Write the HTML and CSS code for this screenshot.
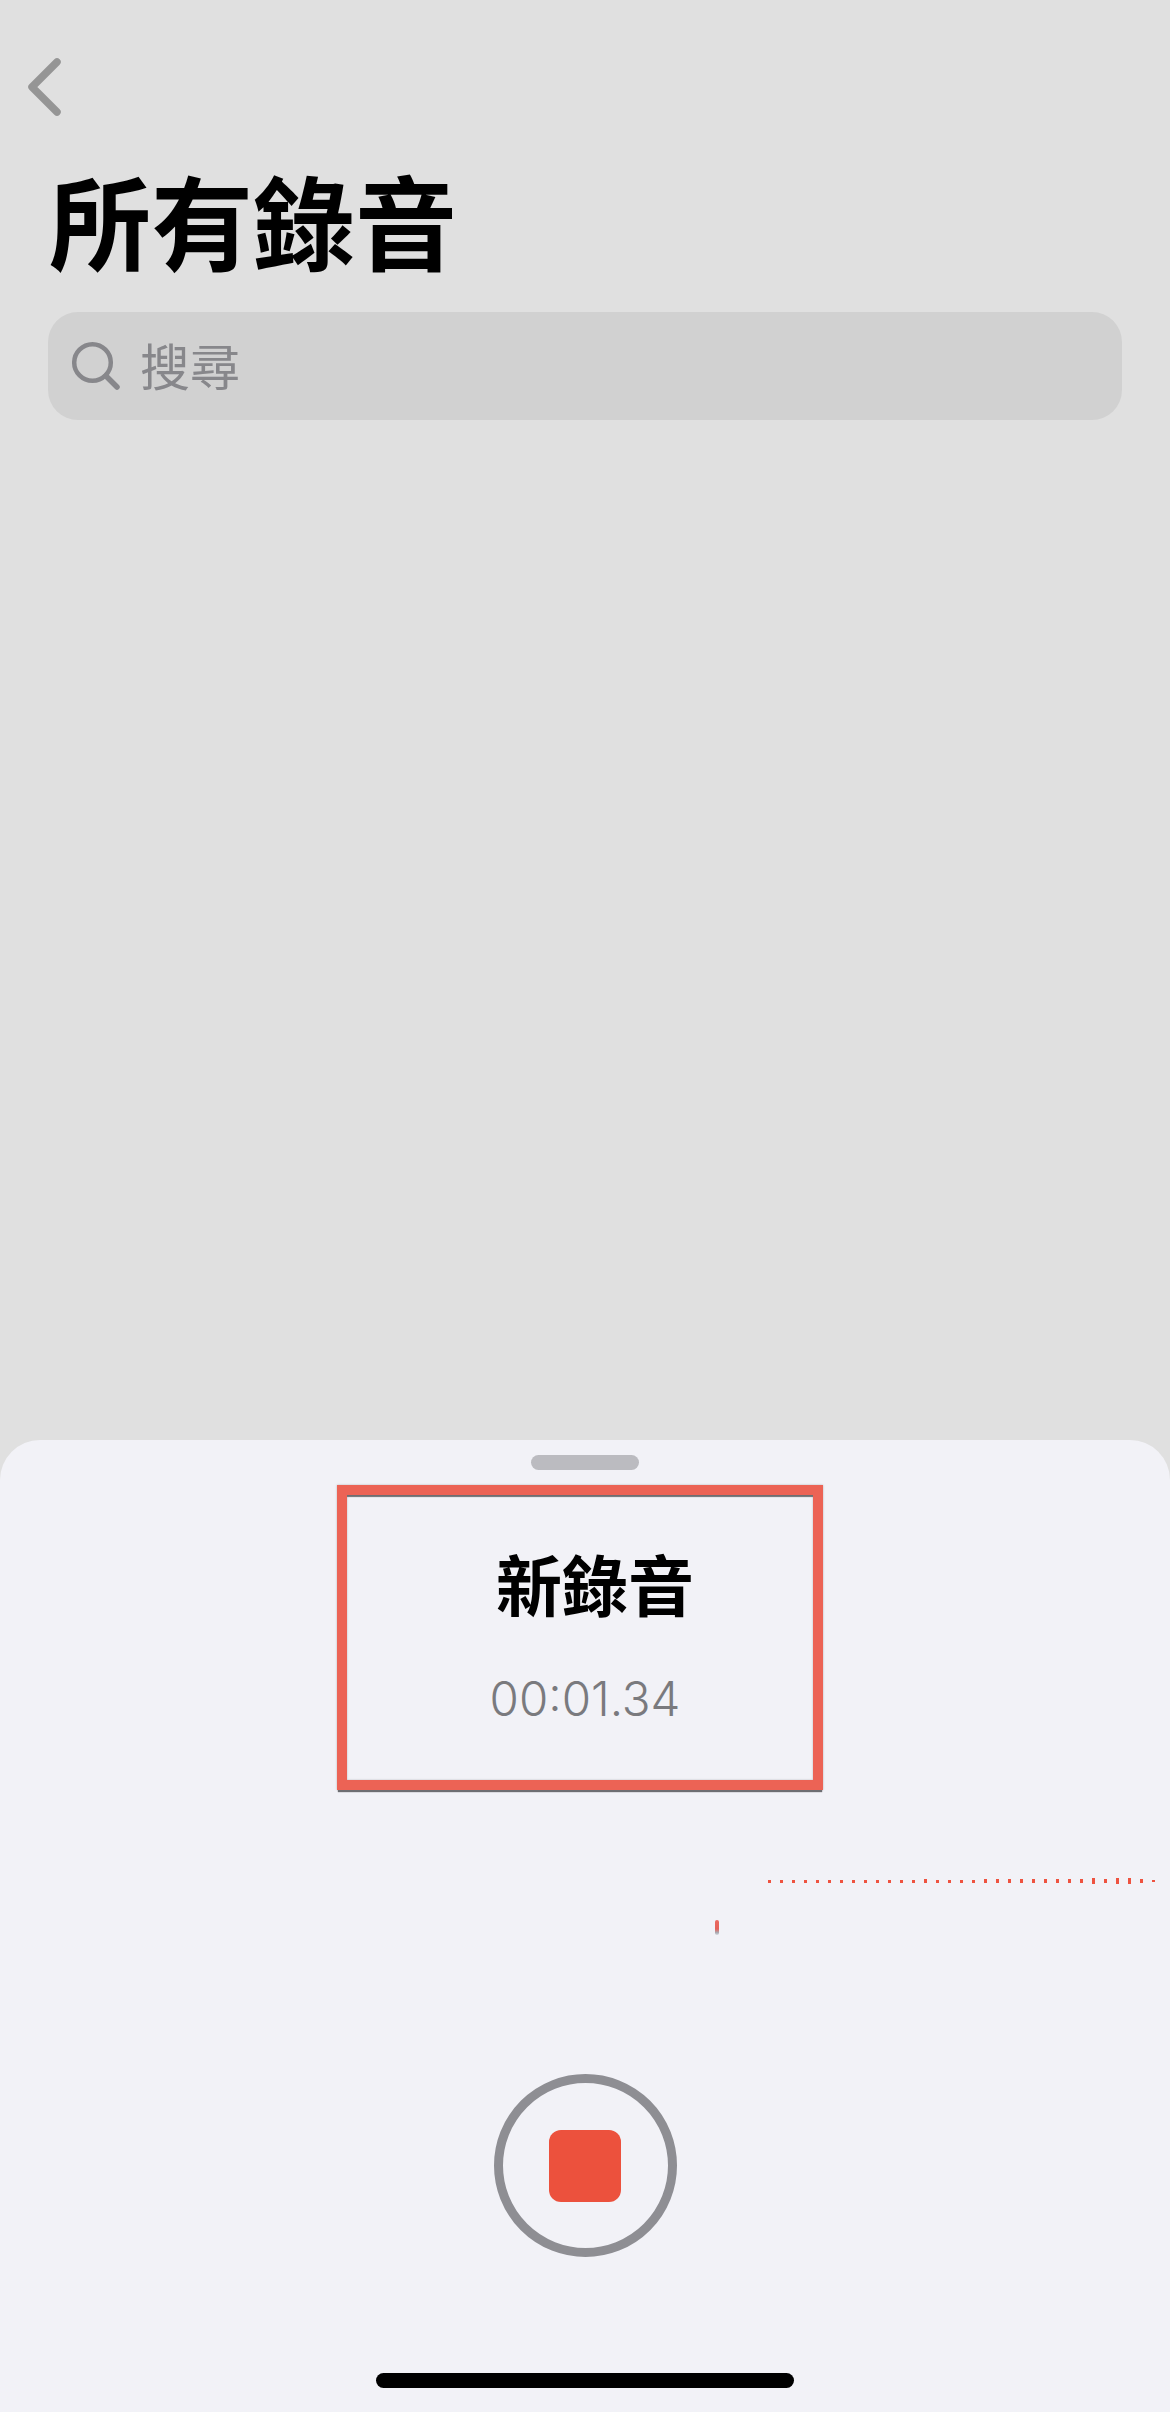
FILE: index.html
```html
<!DOCTYPE html>
<html lang="zh-Hant">
<head>
<meta charset="utf-8">
<title>所有錄音</title>
<link rel="stylesheet" href="styles.css">
</head>
<body>
<div class="page">
  <header class="top">
    <svg class="back" width="40" height="62" viewBox="0 0 40 62"><path d="M33 6 L8 31 L33 56" fill="none" stroke="#959595" stroke-width="7.5" stroke-linecap="round" stroke-linejoin="round"/></svg>
    <h1 class="heading">所有錄音</h1>
    <div class="search">
      <svg class="search-icon" width="52" height="52" viewBox="0 0 52 52"><circle cx="22.5" cy="22.5" r="18.3" fill="none" stroke="#87878b" stroke-width="4.5"/><path d="M36 36 L47 47" fill="none" stroke="#87878b" stroke-width="5.5" stroke-linecap="round"/></svg>
      <span class="search-text">搜尋</span>
    </div>
  </header>
  <section class="sheet">
    <div class="grabber"></div>
    <div class="info">
      <div class="name">新錄音</div>
      <div class="time">00:01.34</div>
      <div class="highlight"></div>
    </div>
    <div class="wave">
      <div class="dots">
        <i class="s"></i><i class="s"></i><i class="s"></i><i class="s"></i><i class="s"></i><i class="s"></i><i class="s"></i><i class="s"></i><i class="s"></i><i class="s"></i><i class="s"></i><i class="s"></i><i class="s"></i>
        <i class="m"></i>
        <i class="s"></i><i class="s"></i><i class="s"></i><i class="s"></i>
        <i class="m"></i><i class="m"></i><i class="m"></i><i class="m"></i><i class="m"></i><i class="m"></i><i class="m"></i><i class="m"></i><i class="m"></i>
        <i class="l"></i><i class="m"></i><i class="l"></i><i class="l"></i><i class="m"></i><i class="t"></i>
      </div>
      <div class="tick-row"><div class="tick"></div></div>
    </div>
    <div class="record"><div class="stop"></div></div>
    <div class="home"></div>
  </section>
</div>
</body>
</html>
```
FILE: styles.css
```css
* { box-sizing: border-box; }
html, body { margin: 0; padding: 0; }
body { width: 1170px; height: 2412px; overflow: hidden; background: #e0e0e0; font-family: "Noto Sans CJK TC", "Noto Sans", sans-serif; }
.page { height: 2412px; display: flex; flex-direction: column; }
.top { flex: 1; padding: 56px 48px 0; display: flex; flex-direction: column; align-items: flex-start; }
.back { display: block; margin-left: -24px; }
.heading { margin: 42px 0 0; font-size: 102px; line-height: 118px; font-weight: 700; color: #000; padding-left: 1px; }
.search { margin-top: 34px; width: 1074px; height: 108px; border-radius: 30px; background: #d1d1d1; display: flex; align-items: center; padding-left: 22px; gap: 18px; }
.search-icon { display: block; flex: none; }
.search-text { font-size: 50px; line-height: 60px; padding-bottom: 4px; color: #87878b; }
.sheet { height: 972px; flex: none; background: #f2f2f7; border-radius: 40px 40px 0 0; display: flex; flex-direction: column; align-items: center; padding-top: 15px; }
.grabber { width: 108px; height: 15px; border-radius: 8px; background: #bbbbc0; }
.info { position: relative; width: 100%; height: 376px; display: flex; flex-direction: column; align-items: center; }
.name { margin-top: 67px; padding-left: 20px; font-size: 66px; line-height: 90px; font-weight: 700; color: #000; }
.time { margin-top: 44px; font-family: Inter, Roboto, sans-serif; font-weight: 300; font-size: 47.5px; line-height: 56px; color: #7a7a7e; }
.highlight { position: absolute; left: 337px; top: 15px; width: 486px; height: 305px; border: 10px solid #ec6355; box-shadow: 0 3px 1px -1px #6e6e72, 0 0 2px rgba(0,0,0,.25), inset 0 3px 1px -1px #6e6e72, inset 0 0 2px rgba(0,0,0,.25); }
.wave { width: 100%; height: 105px; display: flex; flex-direction: column; flex: none; }
.dots { margin-top: 31px; padding-left: 768px; height: 8px; display: flex; align-items: center; gap: 9px; }
.dots i { display: block; width: 3px; flex: none; background: #ee5340; }
.dots .s { height: 3px; }
.dots .m { height: 4px; }
.dots .l { height: 6px; }
.dots .t { height: 2px; }
.tick-row { margin-top: 35px; padding-left: 715px; }
.tick { width: 4px; height: 15px; border-radius: 2px; background: linear-gradient(#ea6a60 0, #e5625a 60%, #a9adb5 85%, #d5d6dc 100%); }
.record { margin-top: 123px; width: 183px; height: 183px; flex: none; border-radius: 50%; border: 9px solid #8e8e93; display: flex; align-items: center; justify-content: center; }
.stop { width: 72px; height: 72px; border-radius: 12px; background: #ec513d; }
.home { margin-top: 116px; width: 418px; height: 15px; flex: none; border-radius: 8px; background: #000; }
```
